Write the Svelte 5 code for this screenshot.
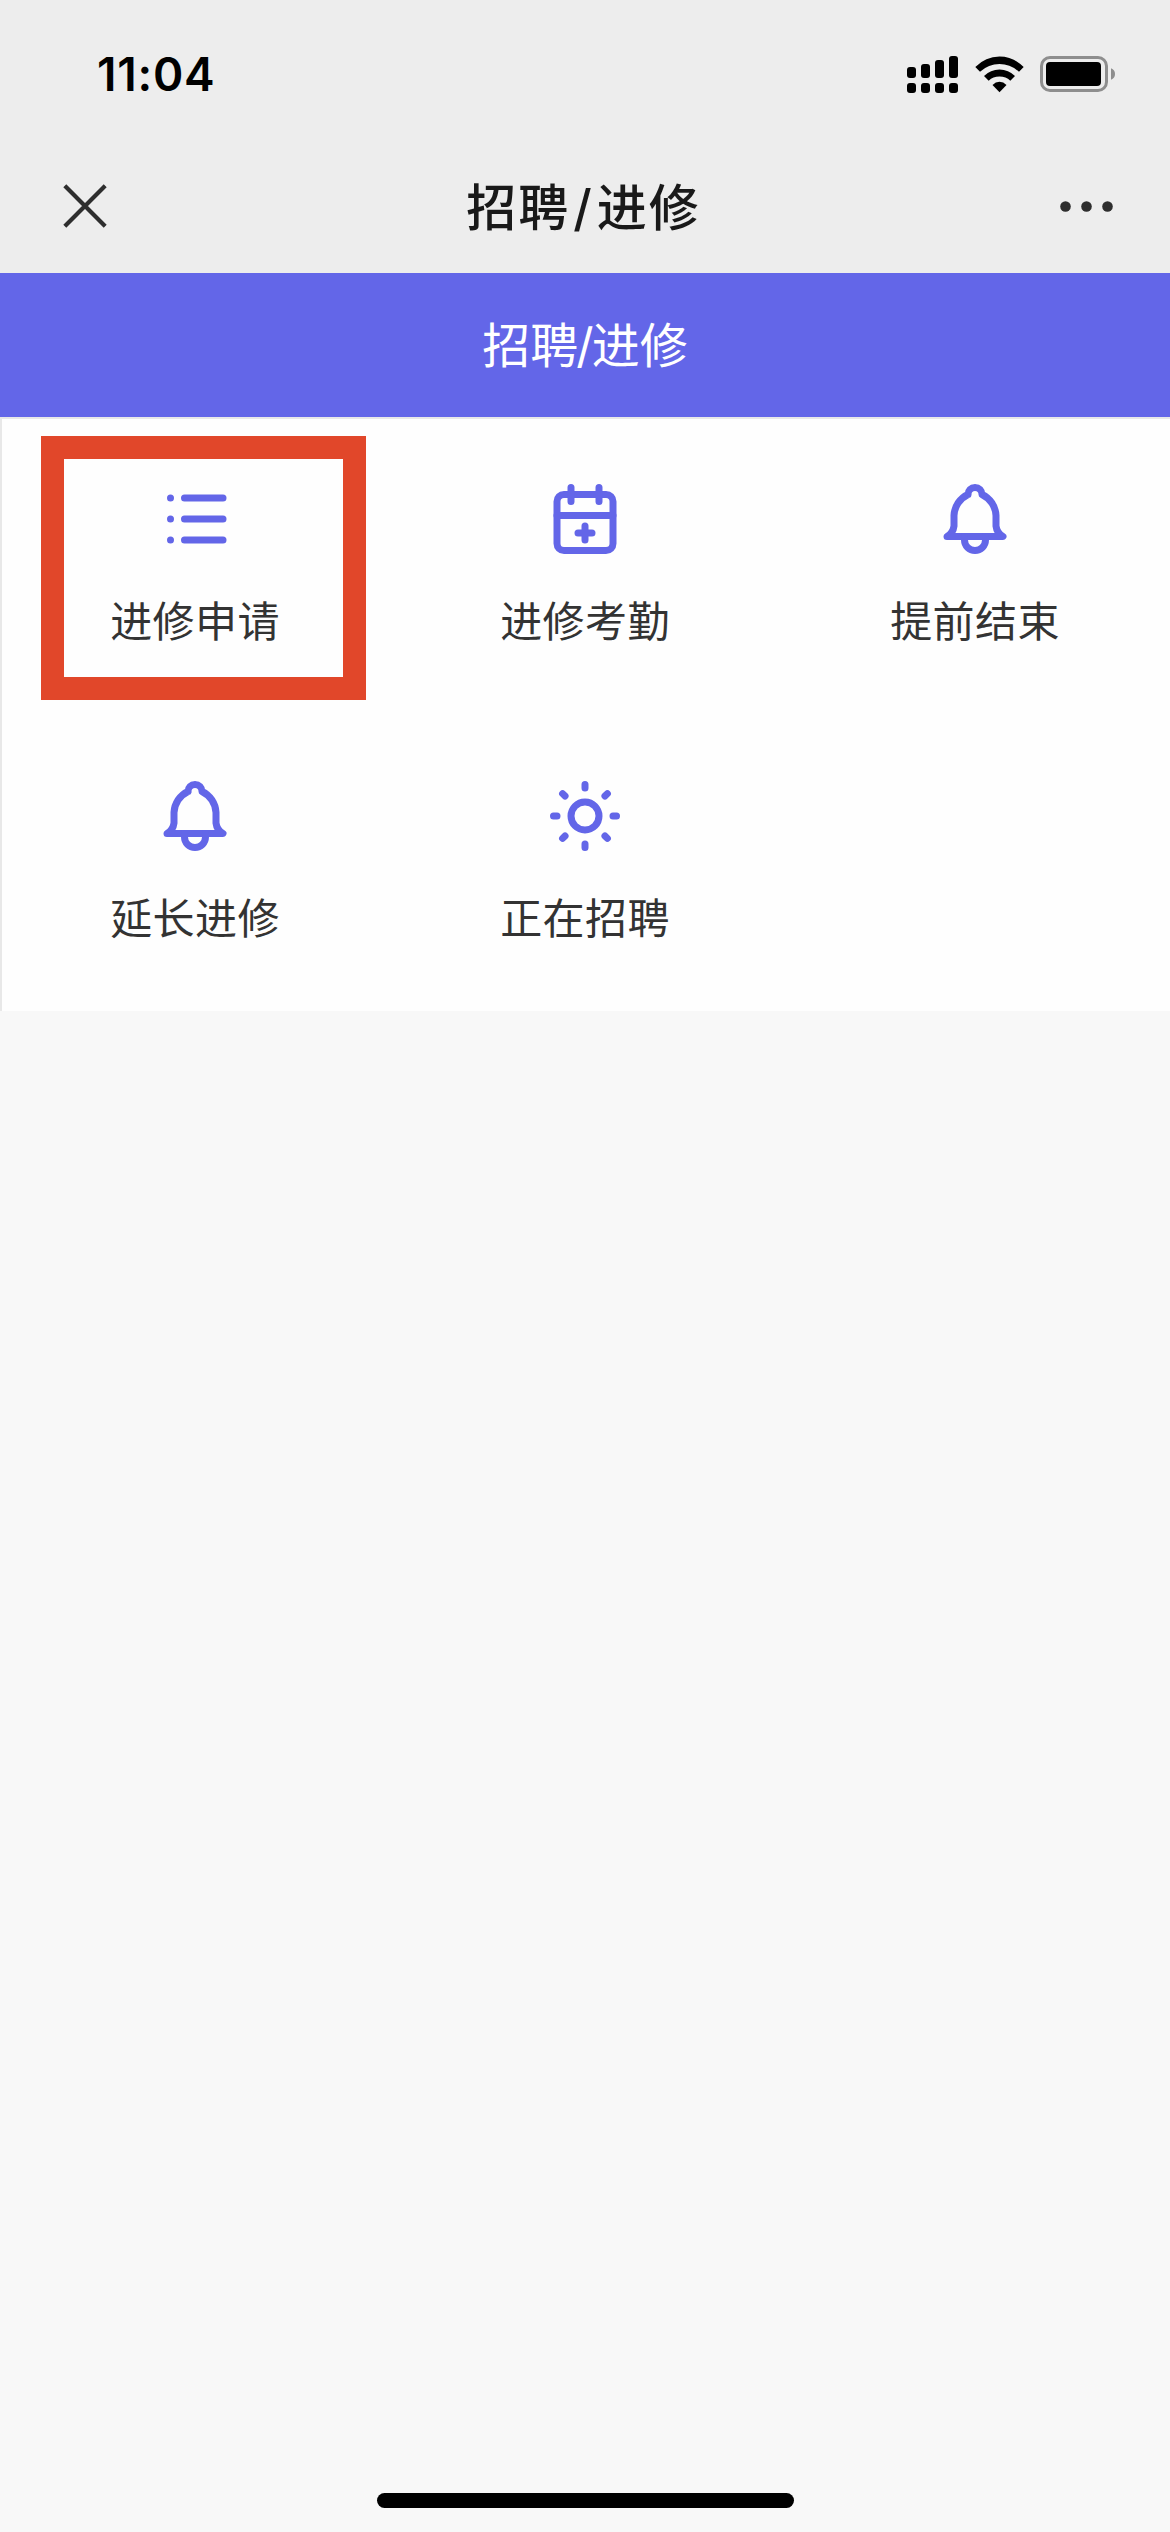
<script lang="ts">
	type IconName = 'list' | 'calendar' | 'bell' | 'sun';

	interface MenuItem {
		label: string;
		icon: IconName;
		marked?: boolean;
	}

	const items: MenuItem[] = [
		{ label: '进修申请', icon: 'list', marked: true },
		{ label: '进修考勤', icon: 'calendar' },
		{ label: '提前结束', icon: 'bell' },
		{ label: '延长进修', icon: 'bell' },
		{ label: '正在招聘', icon: 'sun' }
	];

	const icons: Record<IconName, string[]> = {
		list: ['M9 6h11M9 12h11M9 18h11', 'M5 6v.01M5 12v.01M5 18v.01'],
		calendar: [
			'M6 5h12a2 2 0 0 1 2 2v12a2 2 0 0 1-2 2H6a2 2 0 0 1-2-2V7a2 2 0 0 1 2-2z',
			'M16 3v4M8 3v4M4 11h16M10 16h4M12 14v4'
		],
		bell: [
			'M10 5a2 2 0 0 1 4 0a7 7 0 0 1 4 6v3a4 4 0 0 0 2 3H4a4 4 0 0 0 2-3v-3a7 7 0 0 1 4-6',
			'M9 17v1a3 3 0 0 0 6 0v-1'
		],
		sun: [
			'M8 12a4 4 0 1 0 8 0a4 4 0 1 0-8 0',
			'M3 12h1M12 3v1M20 12h1M12 20v1M5.6 5.6l.7.7M18.4 5.6l-.7.7M17.7 17.7l.7.7M6.3 17.7l-.7.7'
		]
	};

	const signal = [11, 14, 18, 22];
</script>

<div class="screen">
	<header>
		<div class="status">
			<span class="time">11:04</span>
			<div class="indicators">
				<svg class="signal" width="51" height="37" viewBox="0 0 51 37">
					{#each signal as height, i}
						<rect x={i * 14} y={22 - height} width="9" {height} rx="3" />
						<rect x={i * 14} y="27" width="9" height="10" rx="3" />
					{/each}
				</svg>
				<svg class="wifi" width="49" height="37" viewBox="0 0 49 37">
					<path d="M0.3 11.1Q10.5 0.5 24.5 0.5T48.7 11.1L44 15.8Q35.5 8 24.5 8T5 15.8z" />
					<path d="M9 20Q15.5 13.4 24.5 13.4T40 20L35.3 24.8Q31 20.6 24.5 20.6T13.7 24.8z" />
					<path d="M17.5 28.9Q20.5 25.7 24.5 25.7T31.5 28.9L24.5 36.2z" />
				</svg>
				<svg class="battery" width="75" height="36" viewBox="0 0 75 36">
					<rect x="1.5" y="1.5" width="65" height="33" rx="8.5" fill="none" stroke="#8e8e8e" stroke-width="3" />
					<rect x="6" y="6" width="55" height="24" rx="4" />
					<path d="M71 12.3q4 1.5 4 5.7t-4 5.7z" fill="#8e8e8e" />
				</svg>
			</div>
		</div>
		<nav>
			<svg class="close" width="44" height="44" viewBox="0 0 44 44">
				<path d="M1.8 1.8l40.4 40.4M42.2 1.8L1.8 42.2" />
			</svg>
			<h1>招聘<span>/</span>进修</h1>
			<svg class="more" width="53" height="11" viewBox="0 0 53 11">
				<circle cx="5.5" cy="5.5" r="5.3" />
				<circle cx="26.5" cy="5.5" r="5.3" />
				<circle cx="47.5" cy="5.5" r="5.3" />
			</svg>
		</nav>
	</header>

	<h2>招聘<span>/</span>进修</h2>

	<main>
		{#each items as item}
			<div class="item" class:marked={item.marked}>
				<svg class="icon" width="84" height="84" viewBox="0 0 24 24">
					{#each icons[item.icon] as d}
						<path {d} />
					{/each}
				</svg>
				<span>{item.label}</span>
			</div>
		{/each}
	</main>

	<div class="home-bar"></div>
</div>

<style>
	:global(body) {
		background: #f8f8f8;
	}
	.screen {
		display: flex;
		flex-direction: column;
		width: 1170px;
		height: 2532px;
		background: #f8f8f8;
		font-family: Inter, 'Noto Sans CJK SC', sans-serif;
		overflow: hidden;
	}
	header {
		height: 273px;
		background: #ededed;
	}
	.status {
		display: flex;
		align-items: center;
		justify-content: space-between;
		height: 141px;
		box-sizing: border-box;
		padding: 8px 55px 0 97px;
	}
	.time {
		margin-bottom: 1px;
		font-size: 46px;
		font-weight: 600;
		line-height: 56px;
		letter-spacing: 0.8px;
		color: #000;
	}
	.indicators {
		display: flex;
		align-items: center;
		margin-bottom: 1px;
	}
	.wifi {
		margin-left: 17px;
	}
	.battery {
		margin-left: 16px;
	}
	nav {
		display: flex;
		align-items: center;
		justify-content: space-between;
		height: 132px;
		box-sizing: border-box;
		padding: 0 57px 0 63px;
	}
	.close {
		margin-bottom: 2px;
		stroke: #2e2e2e;
		stroke-width: 4.2;
	}
	.more {
		margin-bottom: 1px;
		fill: #2e2e2e;
	}
	h1 {
		margin: 0;
		padding-top: 1px;
		font-size: 50px;
		font-weight: 500;
		line-height: 72px;
		letter-spacing: 2px;
		color: #191919;
	}
	h1 span {
		margin: 0 3px;
	}
	h2 {
		height: 144px;
		box-sizing: border-box;
		margin: 0;
		padding-top: 2px;
		font-size: 48px;
		font-weight: 400;
		line-height: 142px;
		text-align: center;
		color: #fff;
		background: #6366e8;
	}
	h2 span {
		margin: 0 -2px;
	}
	main {
		display: grid;
		grid-template-columns: repeat(3, 390px);
		grid-auto-rows: 297px;
		background: #fefefe;
		box-shadow: inset 2px 2px #e8e8e8;
	}
	.item {
		position: relative;
		display: flex;
		flex-direction: column;
		align-items: center;
		padding-top: 60px;
	}
	.icon {
		fill: none;
		stroke: #6366e8;
		stroke-width: 2;
		stroke-linecap: round;
		stroke-linejoin: round;
	}
	.item span {
		margin-top: 26px;
		font-family: 'Noto Sans CJK SC', sans-serif;
		font-size: 42px;
		line-height: 63px;
		letter-spacing: 0.4px;
		color: #333;
	}
	.marked::after {
		content: '';
		position: absolute;
		top: 19px;
		left: 41px;
		width: 325px;
		height: 264px;
		box-sizing: border-box;
		border: 23px solid #e1472a;
	}
	.home-bar {
		width: 417px;
		height: 15px;
		margin: auto auto 24px;
		border-radius: 8px;
		background: #000;
	}
</style>
